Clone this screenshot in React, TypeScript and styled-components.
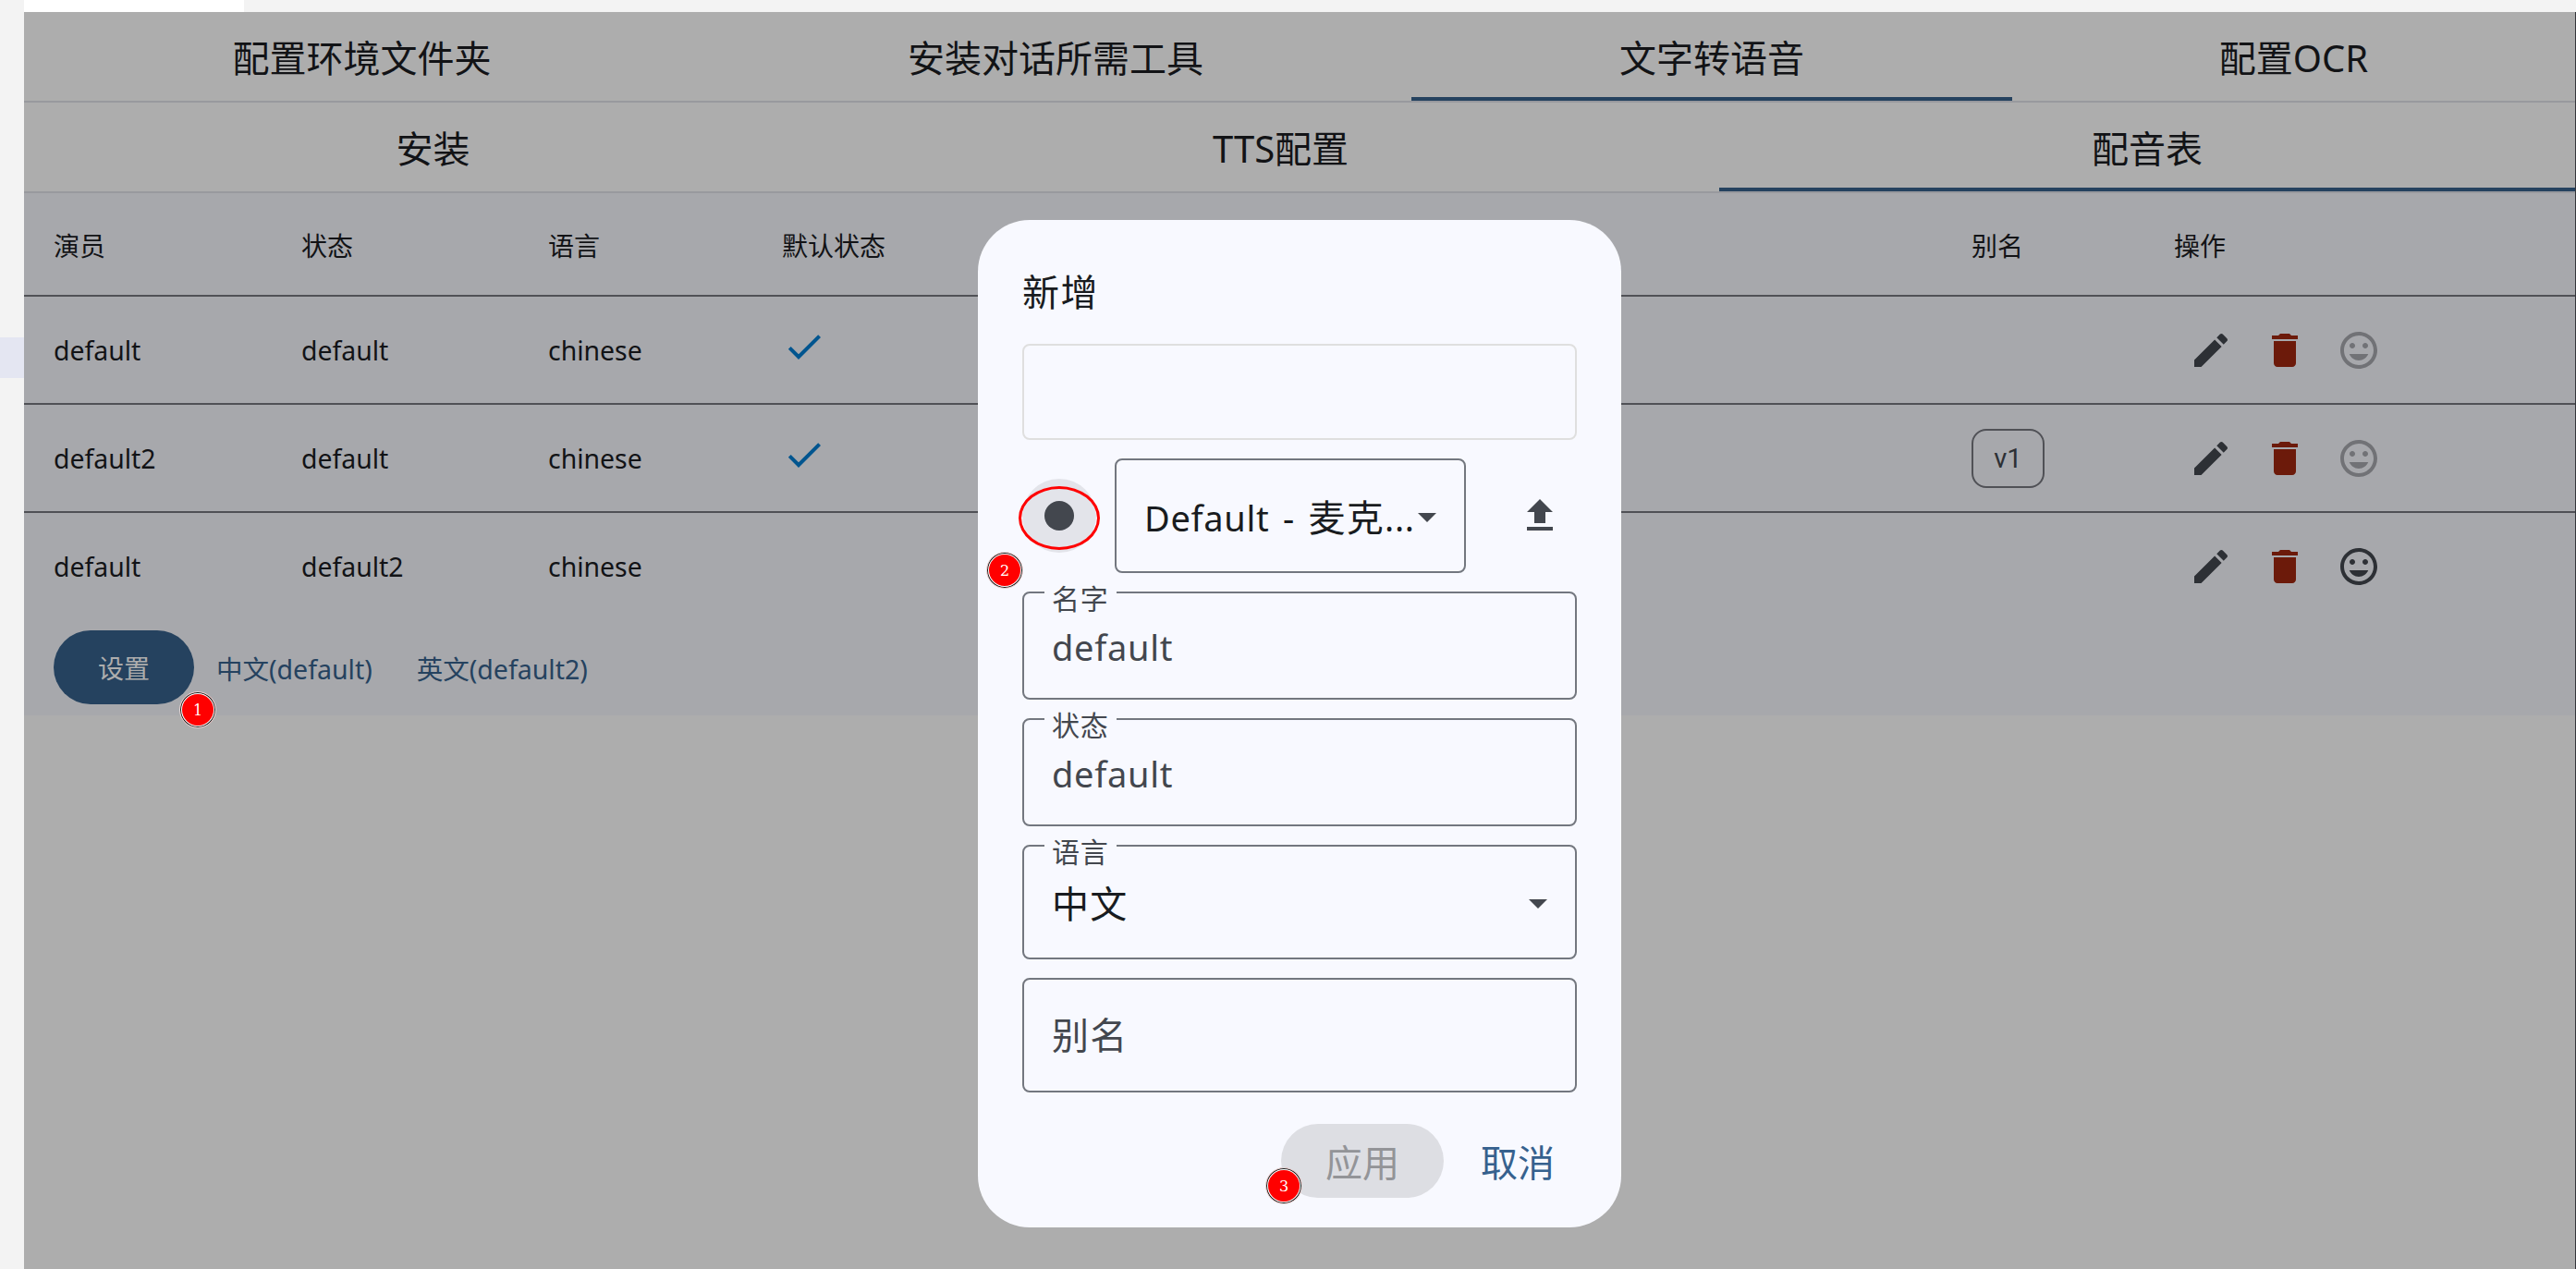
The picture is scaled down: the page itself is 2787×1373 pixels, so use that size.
import React, { FC, ReactNode } from 'react';
import styled, { createGlobalStyle } from 'styled-components';

const GlobalStyle = createGlobalStyle`
  * {
    box-sizing: border-box;
  }

  body {
    margin: 0;
    overflow: hidden;
    background: #f3f3f3;
    font-family: "Noto Sans", "Noto Sans CJK SC", sans-serif;
    color: #121316;
  }

  button {
    font: inherit;
    border: 0;
    cursor: pointer;
  }
`;

const Window = styled.div`
  display: flex;
  width: 2787px;
  height: 1373px;
`;

const SideRail = styled.div`
  width: 26px;
  padding-top: 365px;
  background: #f3f3f3;
`;

const SideItem = styled.div`
  height: 44px;
  background: #e4e6f2;
`;

const Main = styled.div`
  flex: 1;
  display: flex;
  flex-direction: column;
`;

const TopStrip = styled.div`
  height: 13px;
  background: #f3f3f3;
`;

const OpenTab = styled.div`
  width: 238px;
  height: 13px;
  background: #fff;
`;

const Page = styled.div`
  flex: 1;
  background: #adadad;
  border-right: 1px solid #33353a;
`;

const TabBar = styled.div<{ $columns: string }>`
  display: grid;
  grid-template-columns: ${({ $columns }) => $columns};
  height: 98px;
  border-bottom: 2px solid #98999e;
`;

const Tab = styled.div<{ $active?: boolean }>`
  display: flex;
  align-items: center;
  justify-content: center;
  padding-top: 7px;
  border-bottom: 4px solid ${({ $active }) => ($active ? '#25425f' : 'transparent')};
  font-size: 40px;
  line-height: 56px;
`;

const Panel = styled.div`
  height: 565px;
  background: #a7a8ac;
`;

const Row = styled.div<{ $head?: boolean; $last?: boolean }>`
  display: grid;
  grid-template-columns: 268px 267px 253px 1287px 219px 1fr;
  align-items: center;
  height: ${({ $head }) => ($head ? 112 : 117)}px;
  padding-left: 32px;
  padding-top: ${({ $head }) => ($head ? 2 : 0)}px;
  padding-bottom: ${({ $last }) => ($last ? 2 : 0)}px;
  border-bottom: ${({ $last }) => ($last ? 0 : 2)}px solid #505156;
  font-size: 28px;
`;

const Latin = styled.span<{ $field?: boolean }>`
  font-size: ${({ $field }) => ($field ? 38 : 28.4)}px;
  letter-spacing: ${({ $field }) => ($field ? 0.7 : 0)}px;
  word-spacing: ${({ $field }) => ($field ? 4 : 0)}px;
`;

const CheckCell = styled.div`
  display: flex;
  padding-bottom: 8px;
  color: #00558f;
`;

const Chip = styled.span`
  display: flex;
  align-items: center;
  justify-content: center;
  width: 79px;
  height: 64px;
  border: 2px solid #505156;
  border-radius: 16px;
  color: #2d3035;
  font-family: Roboto, sans-serif;
  font-size: 29px;
`;

const Actions = styled.div`
  display: flex;
`;

const IconButton = styled.button<{ $color: string; $fill?: string }>`
  display: flex;
  align-items: center;
  justify-content: center;
  width: 80px;
  height: 80px;
  padding: 0;
  border-radius: 50%;
  background: ${({ $fill }) => $fill || 'transparent'};
  color: ${({ $color }) => $color};
`;

const Footer = styled.div`
  display: flex;
  align-items: center;
  padding: 10px 32px 0;
`;

const FilledButton = styled.button<{ $muted?: boolean }>`
  height: 80px;
  padding: 0 48px;
  border-radius: 40px;
  background: ${({ $muted }) => ($muted ? '#dddee3' : '#25425f')};
  color: ${({ $muted }) => ($muted ? '#939498' : '#adadad')};
  font-size: ${({ $muted }) => ($muted ? 40 : 28)}px;
`;

const TextButton = styled.button<{ $large?: boolean }>`
  height: 80px;
  padding: 0 24px;
  background: none;
  color: ${({ $large }) => ($large ? '#36618e' : '#25425f')};
  font-size: ${({ $large }) => ($large ? 40 : 28.5)}px;
`;

const Dialog = styled.div`
  position: absolute;
  left: 1058px;
  top: 238px;
  width: 696px;
  height: 1090px;
  padding: 48px 48px 32px;
  display: flex;
  flex-direction: column;
  gap: 20px;
  border-radius: 56px;
  background: #f8f9ff;
  color: #191c20;
`;

const Title = styled.div`
  height: 66px;
  font-size: 40px;
  line-height: 60px;
  letter-spacing: 1.5px;
`;

const Wave = styled.div`
  height: 104px;
  border: 2px solid #dfdfdf;
  border-radius: 8px;
`;

const RecordRow = styled.div`
  display: flex;
  align-items: center;
  gap: 20px;

  > :last-child {
    margin-left: auto;
  }
`;

const Dot = styled.span`
  width: 32px;
  height: 32px;
  border-radius: 50%;
  background: #43474e;
`;

const Field = styled.div<{ $height: number; $width?: number; $muted?: boolean; $filled?: boolean }>`
  position: relative;
  display: flex;
  align-items: center;
  justify-content: space-between;
  width: ${({ $width }) => ($width ? `${$width}px` : '100%')};
  height: ${({ $height }) => $height}px;
  padding: ${({ $filled }) => ($filled ? 3 : 0)}px 30px 0;
  border: 2px solid #73777f;
  border-radius: 8px;
  color: ${({ $muted }) => ($muted ? '#43474e' : '#191c20')};
  font-size: 40px;
  line-height: 56px;
  letter-spacing: 1.25px;
  white-space: nowrap;
`;

const FieldLabel = styled.span`
  position: absolute;
  left: 22px;
  top: -16px;
  width: 78px;
  height: 40px;
  padding: 0 8px;
  background: #f8f9ff;
  color: #43474e;
  font-size: 30px;
  line-height: 44px;
  letter-spacing: 0.8px;
`;

const DialogActions = styled.div`
  display: flex;
  justify-content: flex-end;
  gap: 16px;
  margin-top: auto;
`;

const Arrow = styled.span`
  border: 10px solid transparent;
  border-top-color: #43474e;
  border-bottom: 0;
`;

const Badge = styled.span<{ $x: number; $y: number }>`
  position: absolute;
  left: ${({ $x }) => $x - 20}px;
  top: ${({ $y }) => $y - 20}px;
  display: flex;
  align-items: center;
  justify-content: center;
  width: 40px;
  height: 40px;
  border: 1px solid #ddd;
  border-radius: 50%;
  background: #f00;
  box-shadow: inset 0 0 0 1px #111, inset 0 0 0 2px #fff;
  color: #fff;
  font-family: "DejaVu Serif", serif;
  font-size: 16px;
`;

const Ring = styled.span`
  position: absolute;
  left: 1102px;
  top: 526px;
  width: 88px;
  height: 69px;
  border: 3px solid #f00;
  border-radius: 50%;
`;

const Icon: FC<{ d: string }> = ({ d }) => (
  <svg width="48" height="48" viewBox="0 0 24 24" fill="currentColor">
    <path d={d} />
  </svg>
);

const CHECK = 'M9 16.17 4.83 12l-1.42 1.41L9 19 21 7l-1.41-1.41z';
const EDIT = 'M3 17.25V21h3.75L17.81 9.94l-3.75-3.75L3 17.25zM20.71 7.04c.39-.39.39-1.02 0-1.41l-2.34-2.34c-.39-.39-1.02-.39-1.41 0l-1.83 1.83 3.75 3.75 1.83-1.83z';
const DELETE = 'M6 19c0 1.1.9 2 2 2h8c1.1 0 2-.9 2-2V7H6v12zM19 4h-3.5l-1-1h-5l-1 1H5v2h14V4z';
const MOOD = 'M11.99 2C6.47 2 2 6.48 2 12s4.47 10 9.99 10C17.52 22 22 17.52 22 12S17.52 2 11.99 2zM12 20c-4.42 0-8-3.58-8-8s3.58-8 8-8 8 3.58 8 8-3.58 8-8 8zm3.5-9c.83 0 1.5-.67 1.5-1.5S16.33 8 15.5 8 14 8.67 14 9.5s.67 1.5 1.5 1.5zm-7 0c.83 0 1.5-.67 1.5-1.5S9.33 8 8.5 8 7 8.67 7 9.5 7.67 11 8.5 11zm3.5 6.5c2.33 0 4.31-1.46 5.11-3.5H6.89c.8 2.04 2.78 3.5 5.11 3.5z';
const UPLOAD = 'M5 20h14v-2H5v2zM5 10h4v6h6v-6h4l-7-7-7 7z';

interface Voice {
  actor: string;
  state: string;
  isDefault: boolean;
  alias?: string;
}

const voices: Voice[] = [
  { actor: 'default', state: 'default', isDefault: true },
  { actor: 'default2', state: 'default', isDefault: true, alias: 'v1' },
  { actor: 'default', state: 'default2', isDefault: false },
];

const mainTabs = ['配置环境文件夹', '安装对话所需工具', '文字转语音', '配置OCR'];
const ttsTabs = ['安装', 'TTS配置', '配音表'];

const OutlinedField: FC<{
  label?: string;
  height: number;
  width?: number;
  muted?: boolean;
  select?: boolean;
  children: ReactNode;
}> = ({ label, height, width, muted, select, children }) => (
  <Field $height={height} $width={width} $muted={muted} $filled={!!label || select}>
    {label && <FieldLabel>{label}</FieldLabel>}
    <span>{children}</span>
    {select && <Arrow />}
  </Field>
);

const App: FC = () => {
  return (
    <>
      <GlobalStyle />
      <Window>
        <SideRail>
          <SideItem />
        </SideRail>
        <Main>
          <TopStrip>
            <OpenTab />
          </TopStrip>
          <Page>
            <TabBar $columns="731px 770px 650px 1fr">
              {mainTabs.map((tab) => (
                <Tab key={tab} $active={tab === '文字转语音'}>{tab}</Tab>
              ))}
            </TabBar>
            <TabBar $columns="885px 949px 1fr">
              {ttsTabs.map((tab) => (
                <Tab key={tab} $active={tab === '配音表'}>{tab}</Tab>
              ))}
            </TabBar>
            <Panel>
              <Row $head>
                <span>演员</span>
                <span>状态</span>
                <span>语言</span>
                <span>默认状态</span>
                <span>别名</span>
                <span>操作</span>
              </Row>
              {voices.map((voice, i) => (
                <Row key={i} $last={i === voices.length - 1}>
                  <Latin>{voice.actor}</Latin>
                  <Latin>{voice.state}</Latin>
                  <Latin>chinese</Latin>
                  <CheckCell>{voice.isDefault && <Icon d={CHECK} />}</CheckCell>
                  <div>{voice.alias && <Chip>{voice.alias}</Chip>}</div>
                  <Actions>
                    <IconButton $color="#2d3035"><Icon d={EDIT} /></IconButton>
                    <IconButton $color="#6c1a0a"><Icon d={DELETE} /></IconButton>
                    <IconButton $color={voice.isDefault ? '#717276' : '#2d3035'}><Icon d={MOOD} /></IconButton>
                  </Actions>
                </Row>
              ))}
              <Footer>
                <FilledButton>设置</FilledButton>
                <TextButton>中文(default)</TextButton>
                <TextButton>英文(default2)</TextButton>
              </Footer>
            </Panel>
          </Page>
        </Main>
      </Window>
      <Dialog>
        <Title>新增</Title>
        <Wave />
        <RecordRow>
          <IconButton $color="#43474e" $fill="#e3e4ea"><Dot /></IconButton>
          <OutlinedField height={124} width={380} select>
            <Latin $field>Default - </Latin>麦克<Latin $field>...</Latin>
          </OutlinedField>
          <IconButton $color="#43474e"><Icon d={UPLOAD} /></IconButton>
        </RecordRow>
        <OutlinedField label="名字" height={117} muted><Latin $field>default</Latin></OutlinedField>
        <OutlinedField label="状态" height={117} muted><Latin $field>default</Latin></OutlinedField>
        <OutlinedField label="语言" height={124} select>中文</OutlinedField>
        <OutlinedField height={124} muted>别名</OutlinedField>
        <DialogActions>
          <FilledButton $muted>应用</FilledButton>
          <TextButton $large>取消</TextButton>
        </DialogActions>
      </Dialog>
      <Ring />
      <Badge $x={214} $y={768}>1</Badge>
      <Badge $x={1087} $y={617}>2</Badge>
      <Badge $x={1389} $y={1283}>3</Badge>
    </>
  );
};

export default App;
